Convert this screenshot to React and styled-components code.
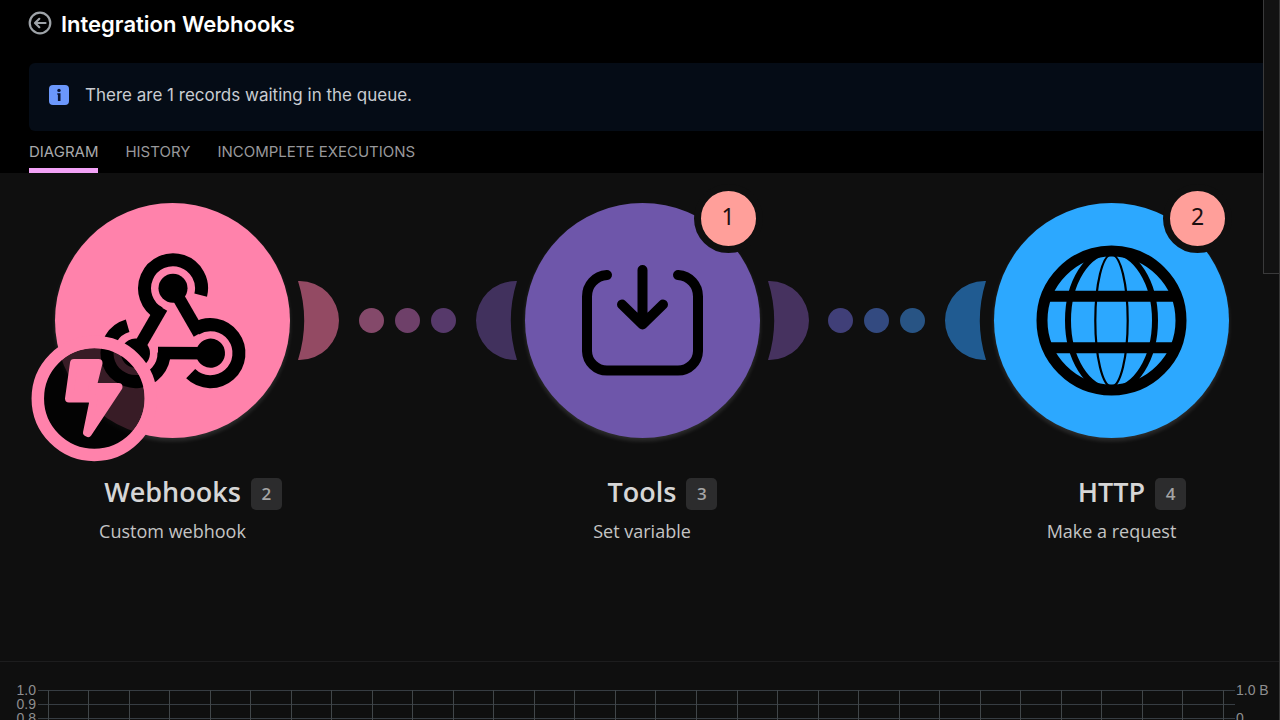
import React from "react";
import styled, { createGlobalStyle } from "styled-components";

const GlobalStyle = createGlobalStyle`
  * { box-sizing: border-box; }
  body {
    margin: 0;
    background: #0f0f0f;
    font-family: Inter, "Liberation Sans", sans-serif;
  }
`;

const Page = styled.div`
  position: relative;
  display: flex;
  flex-direction: column;
  height: 100vh;
  overflow: hidden;
  background: #0f0f0f;
`;

const Header = styled.header`
  padding: 8px 0 0 28px;
  background: #000;
`;

const TitleRow = styled.div`
  display: flex;
  align-items: center;
  gap: 9px;
  height: 32px;
`;

const BackButton = styled.button`
  display: flex;
  margin: 0;
  padding: 0 0 2px;
  border: 0;
  background: none;
  color: #9ea3a8;
  cursor: pointer;
`;

const Title = styled.h1`
  margin: 0;
  color: #fff;
  font-size: 22px;
  line-height: 32px;
  font-weight: 600;
`;

const Alert = styled.div`
  display: flex;
  align-items: center;
  gap: 16px;
  height: 68px;
  margin: 23px 0 0 1px;
  padding: 0 20px 4px;
  border-radius: 6px 0 0 6px;
  background: #050c16;
  color: #c9ccd2;
  font-size: 17px;
  line-height: 24px;
`;

const Tabs = styled.nav`
  display: flex;
  gap: 27px;
  margin-left: 1px;
`;

const Tab = styled.a`
  height: 42px;
  border-bottom: 5px solid ${(p) => (p.$active ? "#f2a2f6" : "transparent")};
  color: ${(p) => (p.$active ? "#a9a9ab" : "#98989b")};
  font-size: 15px;
  line-height: 42px;
  text-decoration: none;
`;

const Diagram = styled.main`
  display: flex;
  height: 489px;
  flex-shrink: 0;
  padding: 30px 51px 0 55px;
  border-bottom: 1px solid #1d1d1e;
  font-family: "Open Sans", "Noto Sans", sans-serif;
`;

const NodeCard = styled.section`
  position: relative;
  display: flex;
  flex: 0 0 235px;
  flex-direction: column;
  align-items: center;
`;

const Disc = styled.div`
  width: 235px;
  height: 235px;
  border-radius: 50%;
  background: ${(p) => p.$color};
  box-shadow: 0 3px 4px rgba(255, 255, 255, 0.13);
  svg { display: block; overflow: visible; }
`;

const OrderBadge = styled.span`
  position: absolute;
  top: -19px;
  right: -3px;
  width: 69px;
  height: 69px;
  border: 7px solid #0f0f0f;
  border-radius: 50%;
  background: #ff9f9a;
  color: #1c0f10;
  font-family: "Noto Sans", "Open Sans", sans-serif;
  font-size: 23px;
  line-height: 51px;
  text-align: center;
`;

const NameRow = styled.div`
  display: grid;
  grid-template-columns: 1fr auto 1fr;
  column-gap: 10px;
  align-items: center;
  width: 100%;
  margin-top: 35px;
`;

const Name = styled.h2`
  grid-column: 2;
  margin: 0;
  color: #d6d6d6;
  font-size: 27px;
  line-height: 38px;
  font-weight: 600;
`;

const IdTag = styled.span`
  width: 31px;
  height: 32px;
  margin-top: 4px;
  border-radius: 5px;
  background: #2c2c2d;
  color: #a4a4a4;
  font-size: 17px;
  line-height: 31px;
  font-weight: 600;
  text-align: center;
`;

const Action = styled.p`
  margin: 7px 0 0;
  color: #c4c4c4;
  font-size: 18px;
  line-height: 26px;
  white-space: nowrap;
`;

const Link = styled.div`
  display: flex;
  flex: 1;
  align-items: center;
  justify-content: space-between;
  height: 235px;
  padding: 0 8px;
`;

const Dots = styled.div`
  display: flex;
  gap: 11px;
`;

const Dot = styled.span`
  width: 25px;
  height: 25px;
  border-radius: 50%;
  background: ${(p) => p.$color};
`;

const Chart = styled.section`
  display: flex;
  flex: 1;
  min-height: 0;
  padding: 21px 11px 0 0;
  overflow: hidden;
  color: #8e8e90;
  font-family: "Liberation Sans", Arial, sans-serif;
  font-size: 14px;
  line-height: 14px;
  white-space: nowrap;
`;

const Scale = styled.div`
  flex: 0 0 ${(p) => p.$width}px;
  padding: ${(p) => (p.$align === "right" ? "0 2px 0 0" : "0 0 0 1px")};
  text-align: ${(p) => p.$align};
`;

const Plot = styled.svg`
  flex: 1;
  min-width: 0;
  height: 148px;
  overflow: hidden;
`;

const SidePanel = styled.aside`
  position: absolute;
  top: 0;
  right: 0;
  width: 17px;
  height: 274px;
  border: 1px solid #3a3a3b;
  border-width: 0 0 1px 1px;
  background: #121212;
`;

const WindowEdge = styled.div`
  position: absolute;
  top: 0;
  right: 0;
  bottom: 0;
  width: 1px;
  background: #363636;
`;

const BackIcon = () => (
  <svg width="24" height="24" viewBox="0 0 24 24" fill="none" stroke="currentColor" strokeWidth="2.2" aria-hidden="true">
    <circle cx="12" cy="12" r="10.3" />
    <path d="M17.5 12H7.2M11.3 7.8L7 12l4.300 4.200" strokeLinecap="round" strokeLinejoin="round" />
  </svg>
);

const InfoIcon = () => (
  <svg width="20" height="20" viewBox="0 0 20 20" aria-hidden="true">
    <rect width="20" height="20" rx="4" fill="#6b97fb" />
    <circle cx="10" cy="5.400" r="1.700" fill="#0a1430" />
    <path d="M8.300 8.200H11.500V16H8.900V9.800H8.300Z" fill="#0a1430" />
  </svg>
);

const WebhookArt = () => (
  <svg width="235" height="235" viewBox="0 0 235 235" aria-hidden="true">
    {[0, 120, 240].map((angle) => (
      <g key={angle} transform={`rotate(${angle} 118 128.5)`}>
        <circle cx="118" cy="85.2" r="14.5" />
        <path d="M118 85.2L144.2 130.7" stroke="#000" strokeWidth="12.5" />
        <path d="M104.5 110.3A28.5 28.5 0 1 1 145.7 92.1" fill="none" stroke="#000" strokeWidth="13" />
      </g>
    ))}
    <circle cx="39.3" cy="195.5" r="50.5" fill="#000" fillOpacity="0.78" />
    <circle cx="39.3" cy="195.5" r="56.5" fill="none" stroke="#ff82ab" strokeWidth="12.5" />
    <path
      d="M19 160H43.500L37.500 184H63.500L33 230L32 229.500L39 195.500H14Z"
      fill="#ff82ab"
      stroke="#ff82ab"
      strokeWidth="8"
      strokeLinejoin="round"
    />
  </svg>
);

const ToolsArt = () => (
  <svg
    width="235"
    height="235"
    viewBox="0 0 235 235"
    fill="none"
    stroke="#000"
    strokeWidth="10"
    strokeLinecap="round"
    strokeLinejoin="round"
    aria-hidden="true"
  >
    <path d="M82 72C70 73 62 82 62 93.500V148A20 20 0 0 0 82 167.500H153A20 20 0 0 0 173 148V93.500C173 82 165 73 153 72" />
    <path d="M117.500 67V121.500M97 101.500L117.500 121.500L138 101.500" />
  </svg>
);

const GlobeArt = () => (
  <svg width="235" height="235" viewBox="0 0 235 235" fill="none" stroke="#000" aria-hidden="true">
    <circle cx="117.500" cy="117.500" r="69.500" strokeWidth="11" />
    <ellipse cx="117.500" cy="117.500" rx="43.500" ry="69" strokeWidth="6" />
    <ellipse cx="117.500" cy="117.500" rx="16.200" ry="66" strokeWidth="2.200" />
    <path d="M54 93.200H181M54 144.800H181" strokeWidth="11" />
  </svg>
);

const Moon = ({ color, flip }) => (
  <svg width="41" height="79" viewBox="0 0 41 79" aria-hidden="true">
    <path
      transform={flip ? "translate(41 0) scale(-1 1)" : undefined}
      d="M0 0H1.500A39.500 39.500 0 0 1 1.500 79H0A132 132 0 0 0 0 0Z"
      fill={color}
    />
  </svg>
);

function Connector({ from, to, dots }) {
  return (
    <Link>
      <Moon color={from} />
      <Dots>
        {dots.map((c) => (
          <Dot key={c} $color={c} />
        ))}
      </Dots>
      <Moon color={to} flip />
    </Link>
  );
}

function Node({ color, name, id, action, order, children }) {
  return (
    <NodeCard>
      <Disc $color={color}>{children}</Disc>
      {order && <OrderBadge>{order}</OrderBadge>}
      <NameRow>
        <Name>{name}</Name>
        <IdTag>{id}</IdTag>
      </NameRow>
      <Action>{action}</Action>
    </NodeCard>
  );
}

const COLUMNS = 29;
const ROWS = [7, 21, 35, 49, 63, 77, 91, 105, 119, 133, 147];

function Grid() {
  return (
    <Plot aria-hidden="true">
      <g stroke="#373d43" strokeWidth="1" shapeRendering="crispEdges">
        {ROWS.map((y) => (
          <line key={y} x1="0" x2="100%" y1={y + 0.5} y2={y + 0.5} />
        ))}
      </g>
      <svg x="10" y="7" width="98.2%" height="141" overflow="visible">
        <g stroke="#414649" strokeWidth="1" shapeRendering="crispEdges">
          {Array.from({ length: COLUMNS + 1 }, (_, i) => (
            <line key={i} x1={`${(i * 100) / COLUMNS}%`} x2={`${(i * 100) / COLUMNS}%`} y1="0" y2="141" />
          ))}
        </g>
      </svg>
    </Plot>
  );
}

export default function App() {
  return (
    <>
      <GlobalStyle />
      <Page>
        <Header>
          <TitleRow>
            <BackButton type="button" aria-label="Back">
              <BackIcon />
            </BackButton>
            <Title>Integration Webhooks</Title>
          </TitleRow>
          <Alert role="status">
            <InfoIcon />
            <span>There are 1 records waiting in the queue.</span>
          </Alert>
          <Tabs>
            <Tab href="#diagram" $active>DIAGRAM</Tab>
            <Tab href="#history">HISTORY</Tab>
            <Tab href="#incomplete">INCOMPLETE EXECUTIONS</Tab>
          </Tabs>
        </Header>
        <Diagram>
          <Node color="#ff82ab" name="Webhooks" id="2" action="Custom webhook">
            <WebhookArt />
          </Node>
          <Connector from="#934a63" to="#41315d" dots={["#84496a", "#6e4069", "#56396a"]} />
          <Node color="#6e56aa" name="Tools" id="3" action="Set variable" order="1">
            <ToolsArt />
          </Node>
          <Connector from="#46325f" to="#205b91" dots={["#403f78", "#334a80", "#285484"]} />
          <Node color="#2ca8ff" name="HTTP" id="4" action="Make a request" order="2">
            <GlobeArt />
          </Node>
        </Diagram>
        <Chart>
          <Scale $width={38} $align="right">
            <div>1.0</div>
            <div>0.9</div>
            <div>0.8</div>
          </Scale>
          <Grid />
          <Scale $width={34} $align="left">
            <div>1.0 B</div>
            <div>&nbsp;</div>
            <div>0</div>
          </Scale>
        </Chart>
        <SidePanel />
        <WindowEdge />
      </Page>
    </>
  );
}
